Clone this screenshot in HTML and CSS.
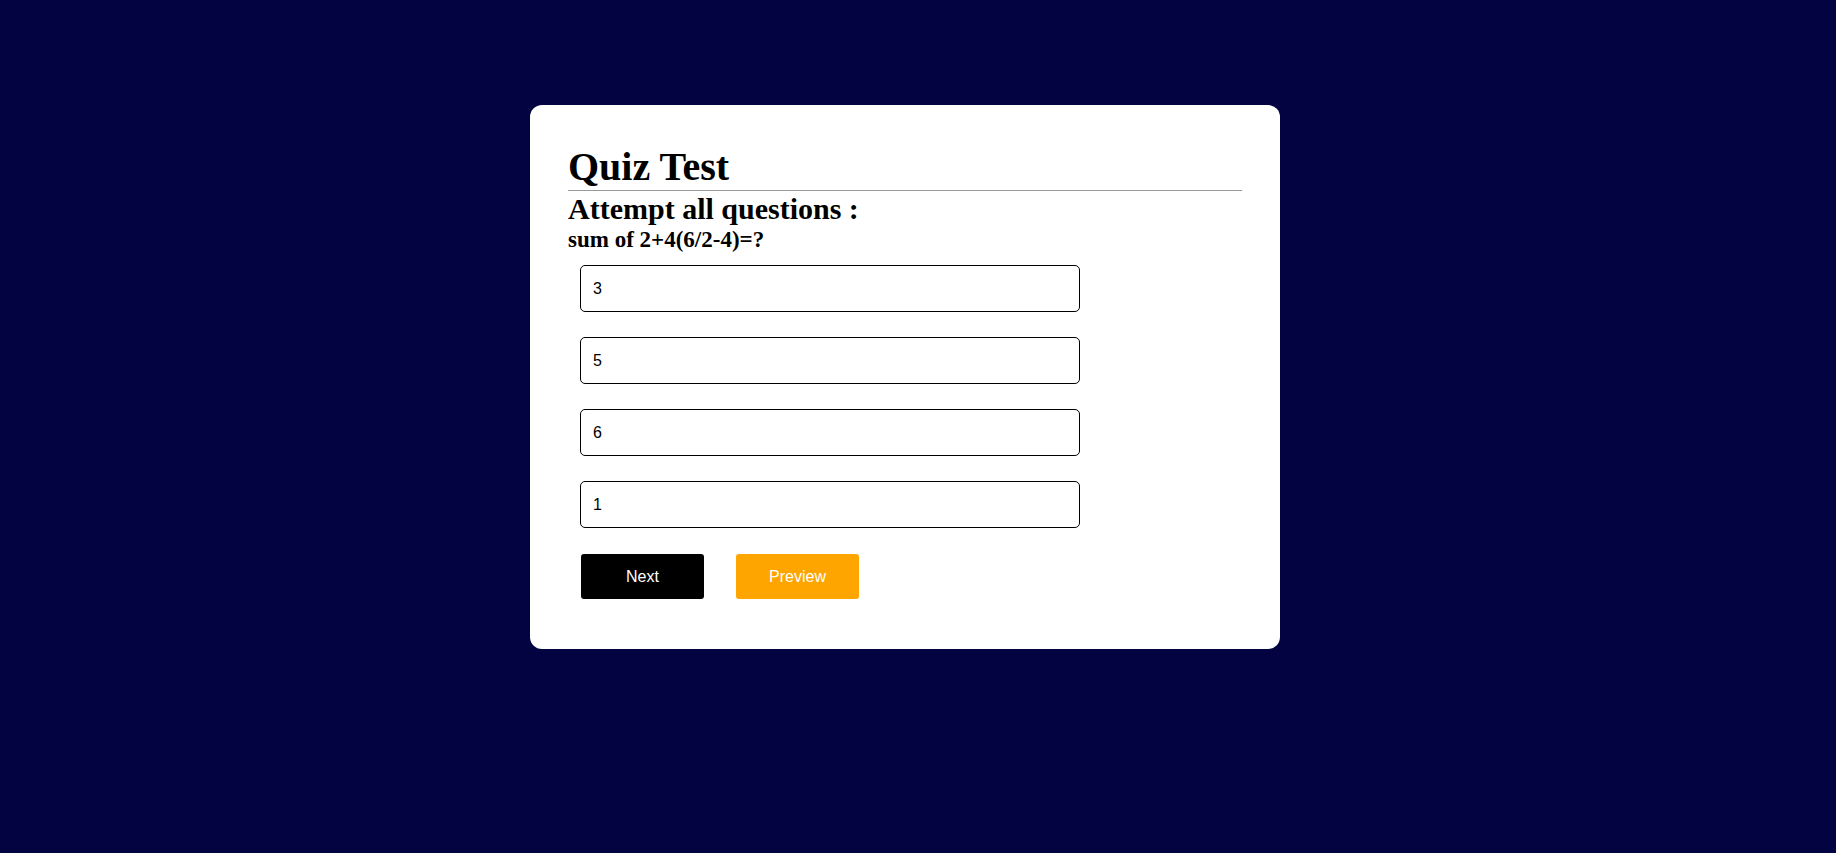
FILE: index.html
```html
<!DOCTYPE html>
<html>
<head>
<meta charset="utf-8">
<title>Quiz Test</title>
<link rel="stylesheet" href="styles.css">
</head>
<body>
<div class="card">
  <h1 class="title">Quiz Test</h1>
  <hr class="rule">
  <h2 class="subtitle">Attempt all questions :</h2>
  <h3 class="question">sum of 2+4(6/2-4)=?</h3>
  <div class="options">
    <div class="option">3</div>
    <div class="option">5</div>
    <div class="option">6</div>
    <div class="option">1</div>
  </div>
  <div class="actions">
    <button class="btn btn-next">Next</button>
    <button class="btn btn-preview">Preview</button>
  </div>
</div>
</body>
</html>
```

FILE: styles.css
```css
html, body {
  margin: 0;
  padding: 0;
}
body {
  background: #030342;
  font-family: "Liberation Serif", "Times New Roman", serif;
  min-height: 853px;
}
.card {
  box-sizing: border-box;
  width: 750px;
  height: 544px;
  margin: 105px 0 0 530px;
  background: #ffffff;
  border-radius: 12px;
  padding: 40px 38px 50px 38px;
}
.title {
  margin: 0;
  font-size: 40px;
  font-weight: bold;
  line-height: 44px;
  color: #000;
}
.rule {
  margin: 1px 0 0 0;
  border: 0;
  border-top: 1px solid #999999;
  height: 0;
}
.subtitle {
  margin: 0;
  font-size: 30px;
  line-height: 35px;
  font-weight: bold;
  color: #000;
}
.question {
  margin: 0;
  font-size: 23px;
  line-height: 28px;
  font-weight: bold;
  color: #000;
}
.options {
  display: flex;
  flex-direction: column;
  gap: 25px;
  margin: 11px 0 0 12px;
}
.option {
  box-sizing: border-box;
  width: 500px;
  height: 47px;
  border: 1px solid #000;
  border-radius: 5px;
  padding: 0 12px;
  display: flex;
  align-items: center;
  font-family: "Liberation Sans", Arial, sans-serif;
  font-size: 16px;
  color: #000;
}
.actions {
  display: flex;
  gap: 32px;
  margin: 26px 0 0 13px;
}
.btn {
  box-sizing: border-box;
  width: 123px;
  height: 45px;
  border: 0;
  border-radius: 3px;
  font-family: "Liberation Sans", Arial, sans-serif;
  font-size: 16px;
  color: #ffffff;
  padding: 0;
}
.btn-next {
  background: #000000;
}
.btn-preview {
  background: #ffa500;
}
```
